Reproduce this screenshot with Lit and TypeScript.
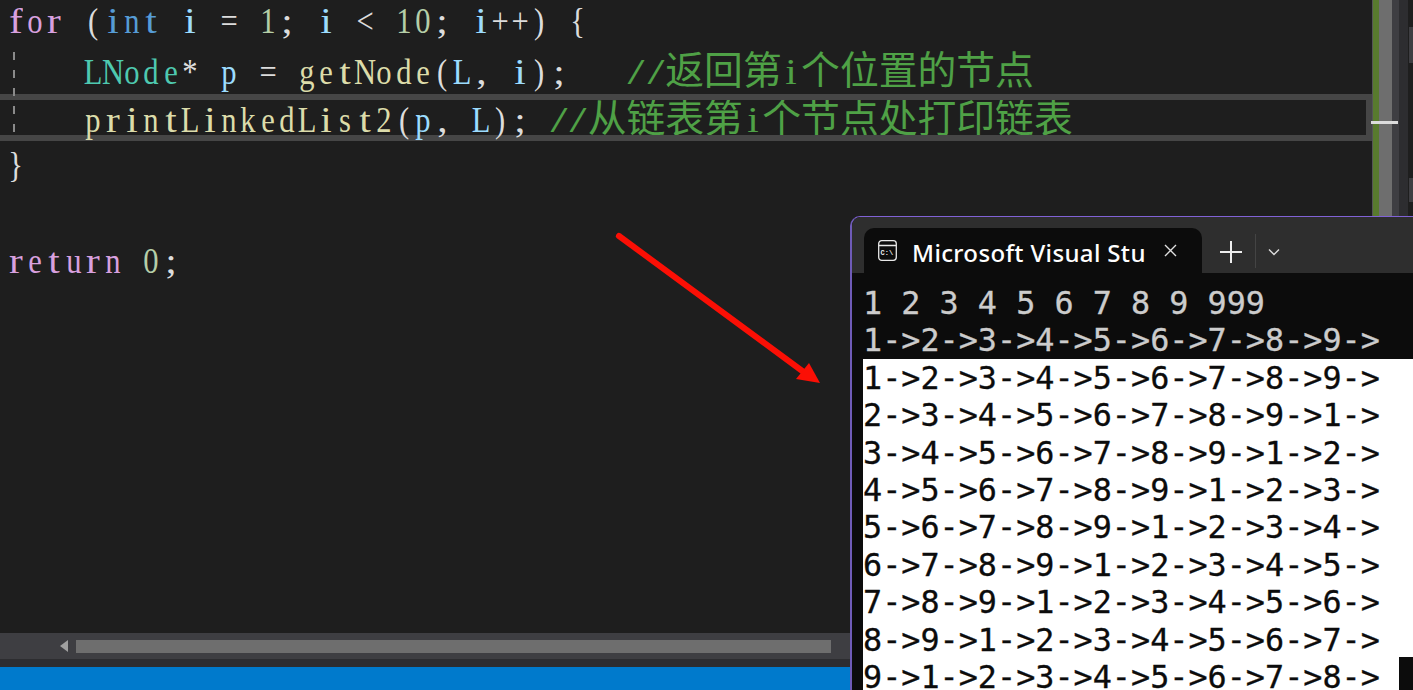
import { LitElement, html, css } from "lit";
import { customElement } from "lit/decorators.js";
import { classMap } from "lit/directives/class-map.js";

type Tok = [string, string];
const code: Tok[][] = [
  [["for", "kw"], [" (", "pn"], ["int", "ty"], [" ", "pn"], ["i", "var"], [" = ", "pn"], ["1", "num"], ["; ", "pn"], ["i", "var"], [" < ", "pn"], ["10", "num"], ["; ", "pn"], ["i", "var"], ["++) {", "pn"]],
  [["    ", "pn"], ["LNode", "cls"], ["* ", "pn"], ["p", "var"], [" = ", "pn"], ["getNode", "fn"], ["(", "pn"], ["L", "var"], [", ", "pn"], ["i", "var"], [");   ", "pn"], ["//", "cm"], ["返回第", "cj"], ["i", "cm"], ["个位置的节点", "cj"]],
  [["    ", "pn"], ["printLinkedList2", "fn"], ["(", "pn"], ["p", "var"], [", ", "pn"], ["L", "var"], ["); ", "pn"], ["//", "cm"], ["从链表第", "cj"], ["i", "cm"], ["个节点处打印链表", "cj"]],
  [["}", "pn"]],
  [["", "pn"]],
  [["return", "kw"], [" ", "pn"], ["0", "num"], [";", "pn"]],
];

const darkLines = ["1 2 3 4 5 6 7 8 9 999", "1->2->3->4->5->6->7->8->9->"];
const lightLines = [
  "1->2->3->4->5->6->7->8->9->",
  "2->3->4->5->6->7->8->9->1->",
  "3->4->5->6->7->8->9->1->2->",
  "4->5->6->7->8->9->1->2->3->",
  "5->6->7->8->9->1->2->3->4->",
  "6->7->8->9->1->2->3->4->5->",
  "7->8->9->1->2->3->4->5->6->",
  "8->9->1->2->3->4->5->6->7->",
  "9->1->2->3->4->5->6->7->8->",
];

@customElement("app-root")
export class AppRoot extends LitElement {
  static styles = css`
    :host { display: block; width: 100%; height: 100vh; overflow: hidden; }
    .page { position: relative; height: 690px; display: flex; flex-direction: column; background: #1e1e1e; overflow: hidden; }
    .editor { flex: 1; min-height: 0; display: flex; overflow: hidden; }
    .code { flex: 1; min-width: 0; overflow: hidden; }
    .line {
      position: relative; height: 48px; box-sizing: border-box; padding-left: 6px; white-space: pre;
      font: 36px/43px "Liberation Serif", serif; color: #dcdcdc;
    }
    .line.current::before {
      content: ""; position: absolute; left: -10px; right: 0; top: -2px; height: 47px;
      box-sizing: border-box; border: 6px solid #464646;
    }
    .ch { display: inline-flex; justify-content: center; width: 19.4px; }
    .ch > span { display: inline-block; transform: scaleX(0.85); }
    .ch > span.narrow { transform: scaleX(1.15); }
    .ch > span.slash { transform: scaleX(1.7); }
    .kw { color: #d8a0df; }
    .ty { color: #569cd6; }
    .var { color: #9cdcfe; }
    .num { color: #b5cea8; }
    .pn { color: #dcdcdc; }
    .cls { color: #4ec9b0; }
    .fn { color: #dcdcaa; }
    .cm { color: #4fa146; }
    .cj { color: #4fa146; font-family: "Noto Sans CJK SC", sans-serif; font-size: 38.8px; line-height: 1; }

    .margin { display: flex; flex: none; width: 41px; }
    .s1 { width: 1px; background: #555; }
    .s2 { width: 6px; background: #587a2e; }
    .s3 { width: 13px; background: #6e6e6e; }
    .s4 { width: 7px; background: #3e3e42; }
    .s5 { width: 9px; background: #2d2d30; }
    .s6 { width: 5px; display: flex; flex-direction: column; border-left: 1px solid #1e1e1e; box-sizing: border-box; }
    .seg { background: #3e3e42; }
    .seg1 { height: 27px; background: #1e1e1e; }
    .seg2 { height: 36px; }
    .seg3 { height: 115px; background: #1e1e1e; }
    .seg4 { height: 24px; }

    .hscroll { flex: none; height: 26px; background: #3e3e42; display: flex; align-items: center; padding-left: 60px; gap: 8px; }
    .hscroll svg { display: block; }
    .thumb { width: 755px; height: 13px; background: #6e6e6e; }
    .band { flex: none; height: 8px; background: #2d2d30; }
    .status { flex: none; height: 23px; background: #007acc; }

    .guide {
      position: absolute; left: 13px; top: 52px; width: 2px; height: 80px;
      background: repeating-linear-gradient(to bottom, #8a8a8a 0 8px, transparent 8px 18px);
    }
    .tick { position: absolute; left: 1371px; top: 121px; width: 27px; height: 3px; background: #dcdcdc; }
    .arrow { position: absolute; left: 600px; top: 220px; }

    .term {
      position: absolute; left: 850px; top: 216px; right: 0; bottom: 0; box-sizing: border-box;
      display: flex; flex-direction: column; overflow: hidden;
      background: #0c0c0c; border-top: 1px solid #8062d6; border-left: 2px solid #6f5bb8; border-top-left-radius: 10px;
    }
    .titlebar { flex: none; height: 56px; background: #2e2e2e; display: flex; align-items: flex-end; padding-left: 12px; box-sizing: border-box; }
    .tab {
      width: 338px; height: 45px; box-sizing: border-box; background: #0c0c0c; border-radius: 10px 10px 0 0;
      display: flex; align-items: center; padding: 0 0 0 14px; color: #fff;
    }
    .tab svg { flex: none; display: block; }
    .prompt { font: 700 7px "Liberation Mono", monospace; fill: #eee; }
    .title { font: 500 24px/30px "Noto Sans", sans-serif; margin: 4px 0 0 15px; width: 233px; white-space: nowrap; letter-spacing: 0.35px; }
    .close { margin-left: 19px; }
    .plus { margin-left: 18px; margin-bottom: 10px; }
    .sep { width: 1px; height: 34px; background: #444; margin: 0 12px 5px 13px; }
    .chev { margin-bottom: 17px; }
    .titlebar svg { display: block; flex: none; }

    .screen { flex: 1; min-height: 0; font: 31.8px/37.4px "DejaVu Sans Mono", monospace; overflow: hidden; }
    .screen .row { white-space: pre; height: 37.4px; -webkit-text-stroke: 0.3px currentColor; }
    .dark { padding: 11px 0 0 11px; color: #cccccc; }
    .light { margin-left: 11px; background: #fff; color: #0c0c0c; height: 400px; position: relative; }
    .cursor { position: absolute; left: 536px; top: 298px; width: 14px; height: 40px; background: #0c0c0c; }
  `;

  private chars(t: string, c: string) {
    if (c === "cj") return html`<span class=${c}>${t}</span>`;
    return html`<span class=${c}>${[...t].map(
      (ch) => html`<span class="ch"><span class=${classMap({ narrow: "iltfrj;:,".includes(ch), slash: ch === "/" })}>${ch}</span></span>`
    )}</span>`;
  }

  render() {
    return html`
      <div class="page">
        <div class="editor">
          <div class="code">
            ${code.map(
              (l, i) => html`<div class="line ${i === 2 ? "current" : ""}">${l.map(([t, c]) => this.chars(t, c))}</div>`
            )}
          </div>
          <div class="margin">
            <div class="s1"></div><div class="s2"></div><div class="s3"></div><div class="s4"></div><div class="s5"></div>
            <div class="s6">
              <div class="seg1"></div><div class="seg seg2"></div><div class="seg3"></div><div class="seg seg4"></div>
            </div>
          </div>
        </div>
        <div class="hscroll">
          <svg width="8" height="12" viewBox="0 0 8 12"><path d="M8 0V12L0 6Z" fill="#a0a0a0"/></svg>
          <div class="thumb"></div>
        </div>
        <div class="band"></div>
        <div class="status"></div>

        <div class="guide"></div>
        <div class="tick"></div>
        <svg class="arrow" width="240" height="180" viewBox="0 0 240 180">
          <path d="M19 16 L205 153" stroke="#fb0f05" stroke-width="6" stroke-linecap="round" fill="none"/>
          <path d="M220 163 L196 159 L209 143 Z" fill="#fb0f05"/>
        </svg>

        <div class="term">
          <div class="titlebar">
            <div class="tab">
              <svg width="19" height="21" viewBox="0 0 19 21">
                <rect x="0.7" y="0.7" width="17.6" height="19.6" rx="3" fill="none" stroke="#e8e8e8" stroke-width="1.3"/>
                <path d="M1 5.5H18" stroke="#e8e8e8" stroke-width="1.3"/>
                <text class="prompt" x="2.5" y="15">C:\\</text>
              </svg>
              <span class="title">Microsoft Visual Stu</span>
              <svg class="close" width="13" height="13" viewBox="0 0 13 13"><path d="M1 1L12 12M12 1L1 12" stroke="#e0e0e0" stroke-width="1.4"/></svg>
            </div>
            <svg class="plus" width="22" height="22" viewBox="0 0 22 22"><path d="M11 0V22M0 11H22" stroke="#eee" stroke-width="2"/></svg>
            <div class="sep"></div>
            <svg class="chev" width="12" height="8" viewBox="0 0 12 8"><path d="M1 1.5L6 6.5L11 1.5" fill="none" stroke="#ddd" stroke-width="1.4"/></svg>
          </div>
          <div class="screen">
            <div class="dark">${darkLines.map((l) => html`<div class="row">${l}</div>`)}</div>
            <div class="light">${lightLines.map((l) => html`<div class="row">${l}</div>`)}<div class="cursor"></div></div>
          </div>
        </div>
      </div>
    `;
  }
}
